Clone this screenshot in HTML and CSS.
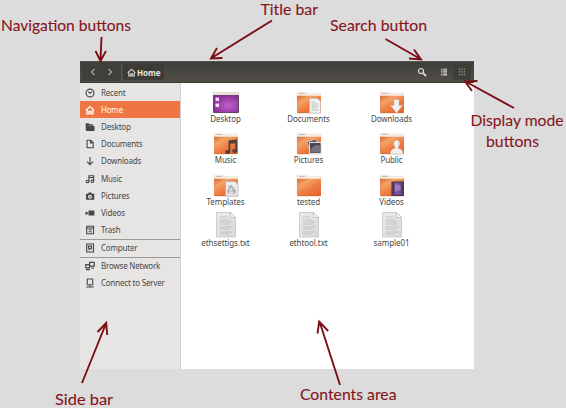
FILE: index.html
```html
<!DOCTYPE html>
<html lang="en">
<head>
<meta charset="utf-8">
<title>File manager overview</title>
<link rel="stylesheet" href="styles.css">
</head>
<body>
<svg class="defs" width="0" height="0" aria-hidden="true">
  <defs>
    <linearGradient id="orange" x1="0" y1="0" x2=".8" y2="1"><stop offset="0" stop-color="#d56a38"/><stop offset=".3" stop-color="#f4a266"/><stop offset=".6" stop-color="#ee7e42"/><stop offset="1" stop-color="#e8652f"/></linearGradient>
    <radialGradient id="purple" cx=".6" cy=".6" r=".7"><stop offset="0" stop-color="#c160cc"/><stop offset="1" stop-color="#852a90"/></radialGradient>
    <linearGradient id="paper" x1="0" y1="0" x2="1" y2="1"><stop offset="0" stop-color="#ececec"/><stop offset="1" stop-color="#d9d9d9"/></linearGradient>
    <symbol id="folder" viewBox="0 0 28 26">
      <path d="M2 9V5.200q0-1 1-1h7.500l1.500 1h13q1 0 1 1V9z" fill="#f5ece5" stroke="#e2d5cc" stroke-width=".4"/>
      <path d="M4 5.500h6" stroke="#c9a48d" stroke-width=".7"/>
      <path d="M2 7.800h24v16.200q0 1-1 1H3q-1 0-1-1z" fill="url(#orange)"/>
      <path d="M2.400 8v16.200" stroke="#d98a62" stroke-width=".5" fill="none"/>
      <path d="M2.500 24.800h23" stroke="#c96436" stroke-width=".6"/>
    </symbol>
    <symbol id="file" viewBox="0 0 28 26">
      <path d="M4.500.5h14l5 5v19.500h-19z" fill="url(#paper)" stroke="#bdbdbd" stroke-width=".7"/>
      <path d="M18.500.5v5h5z" fill="#fafafa" stroke="#aaa" stroke-width=".6"/>
      <path d="M7.500 5h8M7.500 8h10M7.500 10h13M7.500 12h11M7.500 15h13M7.500 17h10M7.500 20h13M7.500 22h9" stroke="#bababa" stroke-width=".8"/>
    </symbol>
  </defs>
</svg>

<main class="window">
  <header class="titlebar">
    <div class="nav">
      <svg viewBox="0 0 8 10"><path d="M5.500 2 2.500 5l3 3"/></svg>
      <svg viewBox="0 0 8 10"><path d="m2.500 2 3 3-3 3"/></svg>
    </div>
    <div class="path">
      <svg viewBox="0 0 10 10"><path d="M.8 5.300 5 1.300l4.200 4M2 5v3.800h2.200V6.500h1.600v2.300H8V5" /></svg>
      <span>Home</span>
    </div>
    <div class="tools">
      <span class="tool search"><svg viewBox="0 0 10 10"><circle cx="4" cy="4" r="2.500"/><path d="m6 6 3 3" stroke-width="1.800"/></svg></span>
      <span class="tool"><svg viewBox="0 0 10 10"><path d="M2 2.200h1.300M2 4.100h1.300M2 6h1.300M2 7.900h1.300M4.100 2.200H8M4.100 4.100H8M4.100 6H8M4.100 7.900H8" stroke-width="1.100"/></svg></span>
      <span class="tool grid-mode"><svg viewBox="0 0 10 10"><path d="M2 2.200h1.300M4.400 2.200h1.300M6.800 2.200h1.300M2 4.900h1.300M4.400 4.900h1.300M6.800 4.900h1.300M2 7.600h1.300M4.400 7.600h1.300M6.800 7.600h1.300" stroke-width="1.200"/></svg></span>
    </div>
  </header>
  <div class="body">
    <nav class="sidebar">
      <div class="item"><svg viewBox="0 0 10 10"><circle cx="5" cy="5" r="3.900"/><path d="M3.300 3.600 5 5.200l2-1.400"/></svg><span>Recent</span></div>
      <div class="item active"><svg viewBox="0 0 10 10"><path d="M.8 5.400 5 1.600l4.200 3.800M2 5v3.800h2V6.500h2v2.300h2V5" stroke-width="1.300"/></svg><span>Home</span></div>
      <div class="item"><svg viewBox="0 0 10 10"><path class="solid" d="M.7 1.300h3.200l.8 1h3.500v1.400H2.500v4.500H.7z"/><path class="solid" d="M2 4h7.500v5H1.200V8z"/></svg><span>Desktop</span></div>
      <div class="item"><svg viewBox="0 0 10 10"><path d="M2.100 1.300h3.700L8.200 3.700v5.100H2.100zM5.600 1.500v2.400H8"/></svg><span>Documents</span></div>
      <div class="item"><svg viewBox="0 0 10 10"><path d="M5 1v7.700M2 5.700l3 3 3-3"/></svg><span>Downloads</span></div>
      <div class="item"><svg viewBox="0 0 10 10"><path d="M3.900 7.500V1.700h4.800v5.500M3.900 3.500h4.800"/><circle cx="2.500" cy="7.500" r="1.300"/><circle cx="7.300" cy="7.200" r="1.300"/></svg><span>Music</span></div>
      <div class="item"><svg viewBox="0 0 10 10"><path class="solid" fill-rule="evenodd" d="M1 2.800h2l.8-1.300h2.500L7 2.800h2.200v6H1zM5 3.800a2 2 0 1 0 .01 0z"/><circle class="solid" cx="5" cy="5.800" r=".8"/></svg><span>Pictures</span></div>
      <div class="item"><svg viewBox="0 0 10 10"><path class="solid" d="M3.500 2.600h5.900v5H3.500zM.5 3.500l2.400 1v1.400l-2.400 1z"/></svg><span>Videos</span></div>
      <div class="item"><svg viewBox="0 0 10 10"><path d="M1.700 1.300h6.800v7.500H1.700zM1 3h8.200M3.700 4.800h3M3.700 6.800h3"/></svg><span>Trash</span></div>
      <div class="item device"><svg viewBox="0 0 10 10"><path d="M1.700 1h6.800v8H1.700z"/><path d="M3.500 5.800V3.200h3v2.500H5L3.700 7" stroke-width="1.200"/></svg><span>Computer</span></div>
      <div class="item"><svg viewBox="0 0 10 10"><path d="M4.600 1.400h4.600v3.700H4.600zM.8 3.600h3.700v3.300H.8zM1 8.700h3.800M6 7h3" stroke-width="1.200"/></svg><span>Browse Network</span></div>
      <div class="item"><svg viewBox="0 0 10 10"><path d="M2.300 1h5.400v5.700H2.300zM5 6.700v2M1.200 9h7.600"/></svg><span>Connect to Server</span></div>
    </nav>
    <section class="contents">
      <div class="entry"><svg viewBox="0 0 28 26"><rect x="1" y="4" width="26" height="21" rx="1" fill="#654266"/><path d="M1 7V5q0-1 1-1h24q1 0 1 1v2z" fill="#e9ddd8"/><rect x="2" y="7.500" width="24" height="16.500" fill="url(#purple)"/><path d="M3.500 9.500h3.500V13H3.500zM3.500 15.500h3.500V19H3.500z" fill="#f1dfef"/></svg><span>Desktop</span></div>
      <div class="entry"><svg viewBox="0 0 28 26"><use href="#folder"/><path d="M14.500 10.500h8l3 3V25h-11z" fill="#f3f3f1" stroke="#bbb" stroke-width=".6"/><path d="M16.500 14h4M16.500 16h7M16.500 18h7M16.500 20h5M16.500 22h7" stroke="#aaa" stroke-width=".7"/></svg><span>Documents</span></div>
      <div class="entry"><svg viewBox="0 0 28 26"><use href="#folder"/><path d="M16 11.500h5v6h3.500L18.500 25l-6-7.500H16z" fill="#f5f1ee" stroke="#cfb6a6" stroke-width=".5"/></svg><span>Downloads</span></div>
      <div class="entry"><svg viewBox="0 0 28 26"><use href="#folder"/><path d="m16.500 11.500 8.500-1v11.500h-1.700v-7.800l-5 .6v8.200h-1.800z" fill="#51413b"/><ellipse cx="15.600" cy="23" rx="2.600" ry="2" fill="#51413b"/><ellipse cx="22.700" cy="22" rx="2.500" ry="2" fill="#51413b"/></svg><span>Music</span></div>
      <div class="entry"><svg viewBox="0 0 28 26"><use href="#folder"/><path d="m12 13 9-3 3 10-9 3z" fill="#555" stroke="#d5cec9" stroke-width=".8"/><path d="M14.500 13.500h11.500v11H14.500z" fill="#4a4352" stroke="#ddd" stroke-width="1"/><path d="M15.500 20q5-6 10-3v6.500h-10z" fill="#77717e"/></svg><span>Pictures</span></div>
      <div class="entry"><svg viewBox="0 0 28 26"><use href="#folder"/><path d="M12.500 25q-.5-5 4.500-5.500v-1.500q-1.500-1.500-1.200-4 .4-2.800 2.900-2.800t2.900 2.800q.2 2.500-1.300 4v1.500q5 .5 4.700 5.500z" fill="#f1eeeb" stroke="#cdb9ad" stroke-width=".5"/></svg><span>Public</span></div>
      <div class="entry"><svg viewBox="0 0 28 26"><use href="#folder"/><path d="M13.500 10.500h9.500l3 3V25H13.500z" fill="#eee" stroke="#aaa" stroke-width=".7"/><path d="M15.500 23.500 19 14l4 9.500M15 20h9M16 14.500l8 7" stroke="#888" stroke-width=".6" fill="none"/><circle cx="19.500" cy="19" r="3.500" stroke="#999" stroke-width=".6" fill="none"/></svg><span>Templates</span></div>
      <div class="entry"><svg viewBox="0 0 28 26"><use href="#folder"/></svg><span>tested</span></div>
      <div class="entry"><svg viewBox="0 0 28 26"><use href="#folder"/><path d="M13.500 10.500H26V25H13.500z" fill="#40313c"/><path d="M16 11.500h7.500V24H16z" fill="#76509a"/><path d="M17 14q3-2 5.500 1v4l-5.500 2z" fill="#a279bd"/><path d="M14.700 11v14M24.900 11v14" stroke="#85787c" stroke-width=".7" stroke-dasharray="1 1.200"/></svg><span>Videos</span></div>
      <div class="entry"><svg viewBox="0 0 28 26"><use href="#file"/></svg><span>ethsettigs.txt</span></div>
      <div class="entry"><svg viewBox="0 0 28 26"><use href="#file"/></svg><span>ethtool.txt</span></div>
      <div class="entry"><svg viewBox="0 0 28 26"><use href="#file"/></svg><span>sample01</span></div>
    </section>
  </div>
</main>

<svg class="callouts" viewBox="0 0 566 408">
  <g class="arrows">
    <path d="M101.500 37 100.500 60M95.500 51l5 10 5.500-10"/>
    <path d="M272 20.500 211.500 58M217 48l-6 10.500L222.500 58"/>
    <path d="M385.500 39 420.500 59M414 49.500l7 10-12-1"/>
    <path d="M514 108 465.500 81.500M477.500 81l-12.500.300L472 91"/>
    <path d="M82 383 106 323.500M97.500 332l8.700-9 1 12"/>
    <path d="M340 385 319.500 321.500M317.500 333.500l1.700-12 9 9.500"/>
  </g>
  <g class="labels">
    <text x="1" y="30.500" textLength="130" lengthAdjust="spacingAndGlyphs">Navigation buttons</text>
    <text class="top" x="260.500" y="14.500" textLength="57.500" lengthAdjust="spacingAndGlyphs">Title bar</text>
    <text x="330" y="30.500" textLength="97" lengthAdjust="spacingAndGlyphs">Search button</text>
    <text x="470.500" y="125.500" textLength="93" lengthAdjust="spacingAndGlyphs">Display mode</text>
    <text x="486" y="146.500" textLength="53" lengthAdjust="spacingAndGlyphs">buttons</text>
    <text x="55" y="404.500" textLength="58" lengthAdjust="spacingAndGlyphs">Side bar</text>
    <text x="300" y="400" textLength="96.500" lengthAdjust="spacingAndGlyphs">Contents area</text>
  </g>
</svg>
</body>
</html>
```
FILE: styles.css
```css
* { box-sizing: border-box; }

body {
  margin: 0;
  width: 566px;
  height: 408px;
  padding: 61px 92px 39px 80px;
  overflow: hidden;
  background: #dcdcdc;
  font-family: "Noto Sans", "Open Sans", sans-serif;
  font-size: 8px;
  letter-spacing: -0.08px;
  color: #484848;
}

svg { display: block; flex: none; }
.defs { position: absolute; }

.window {
  display: flex;
  flex-direction: column;
  width: 394px;
  height: 308px;
  background: #fff;
}

.titlebar {
  display: flex;
  align-items: center;
  height: 22px;
  flex: none;
  padding: 0 3px 0 2px;
  background: linear-gradient(#3f3e39, #504e47);
  border-top: 1px solid #55544e;
  border-bottom: 1px solid #3a3934;
}

.titlebar svg {
  fill: none;
  stroke: #dedbd3;
  stroke-width: 1.2;
}

.nav {
  display: flex;
  align-items: center;
  gap: 9px;
  height: 18px;
  padding: 0 7px 0 7px;
  background: #403f3a;
  border-right: 1px solid #5a5850;
}
.nav svg { width: 8px; height: 10px; stroke: #aaa79f; }

.path {
  display: flex;
  align-items: center;
  gap: 1px;
  height: 16px;
  margin-left: 1px;
  padding: 0 4px;
  border-radius: 2px;
  background: #3c3b36;
  color: #e6e3dc;
  font-weight: 700;
}
.path svg { width: 9px; height: 9px; }

.tools { display: flex; margin-left: auto; }
.tool {
  display: grid;
  place-items: center;
  width: 18px;
  height: 16px;
}
.tool svg { width: 10px; height: 10px; }
.search { margin-right: 4px; }
.grid-mode { background: #3e3d38; border-radius: 2px; }
.grid-mode svg { stroke: #99968e; }

.body { display: flex; flex: 1; min-height: 0; }

.sidebar {
  width: 101px;
  flex: none;
  padding-top: 1px;
  background: #e6e5e4;
  border-right: 1px solid #d3d2d0;
}

.item {
  display: flex;
  align-items: center;
  gap: 6px;
  height: 17.2px;
  padding-left: 5px;
  line-height: 10px;
  letter-spacing: -0.2px;
  white-space: nowrap;
}
.item svg {
  width: 10px;
  height: 10px;
  fill: none;
  stroke: #484746;
  stroke-width: 1.1;
}
.item .solid { fill: #484746; stroke: none; }
.item.active { background: #ef7544; color: #fff; }
.item.active svg { stroke: #fff; }
.item.device {
  height: 19px;
  border-top: 1px solid #9b9a98;
  border-bottom: 1px solid #9b9a98;
}

.contents {
  display: grid;
  grid-template-columns: repeat(3, 83px);
  grid-auto-rows: 41.3px;
  align-content: start;
  padding: 5px 0 0 3px;
}

.entry {
  display: flex;
  flex-direction: column;
  align-items: center;
  line-height: 10px;
}
.entry > svg { width: 28px; height: 26px; }

.callouts {
  position: absolute;
  top: 0;
  left: 0;
  width: 566px;
  height: 408px;
}
.arrows {
  fill: none;
  stroke: #7c0e18;
  stroke-width: 1.9;
}
.labels {
  fill: #86141c;
  stroke: #86141c;
  stroke-width: 0.1;
  font-family: Lato, "Open Sans", sans-serif;
  font-size: 15.8px;
  letter-spacing: 0;
}
.labels .top { font-size: 14.5px; }
```
